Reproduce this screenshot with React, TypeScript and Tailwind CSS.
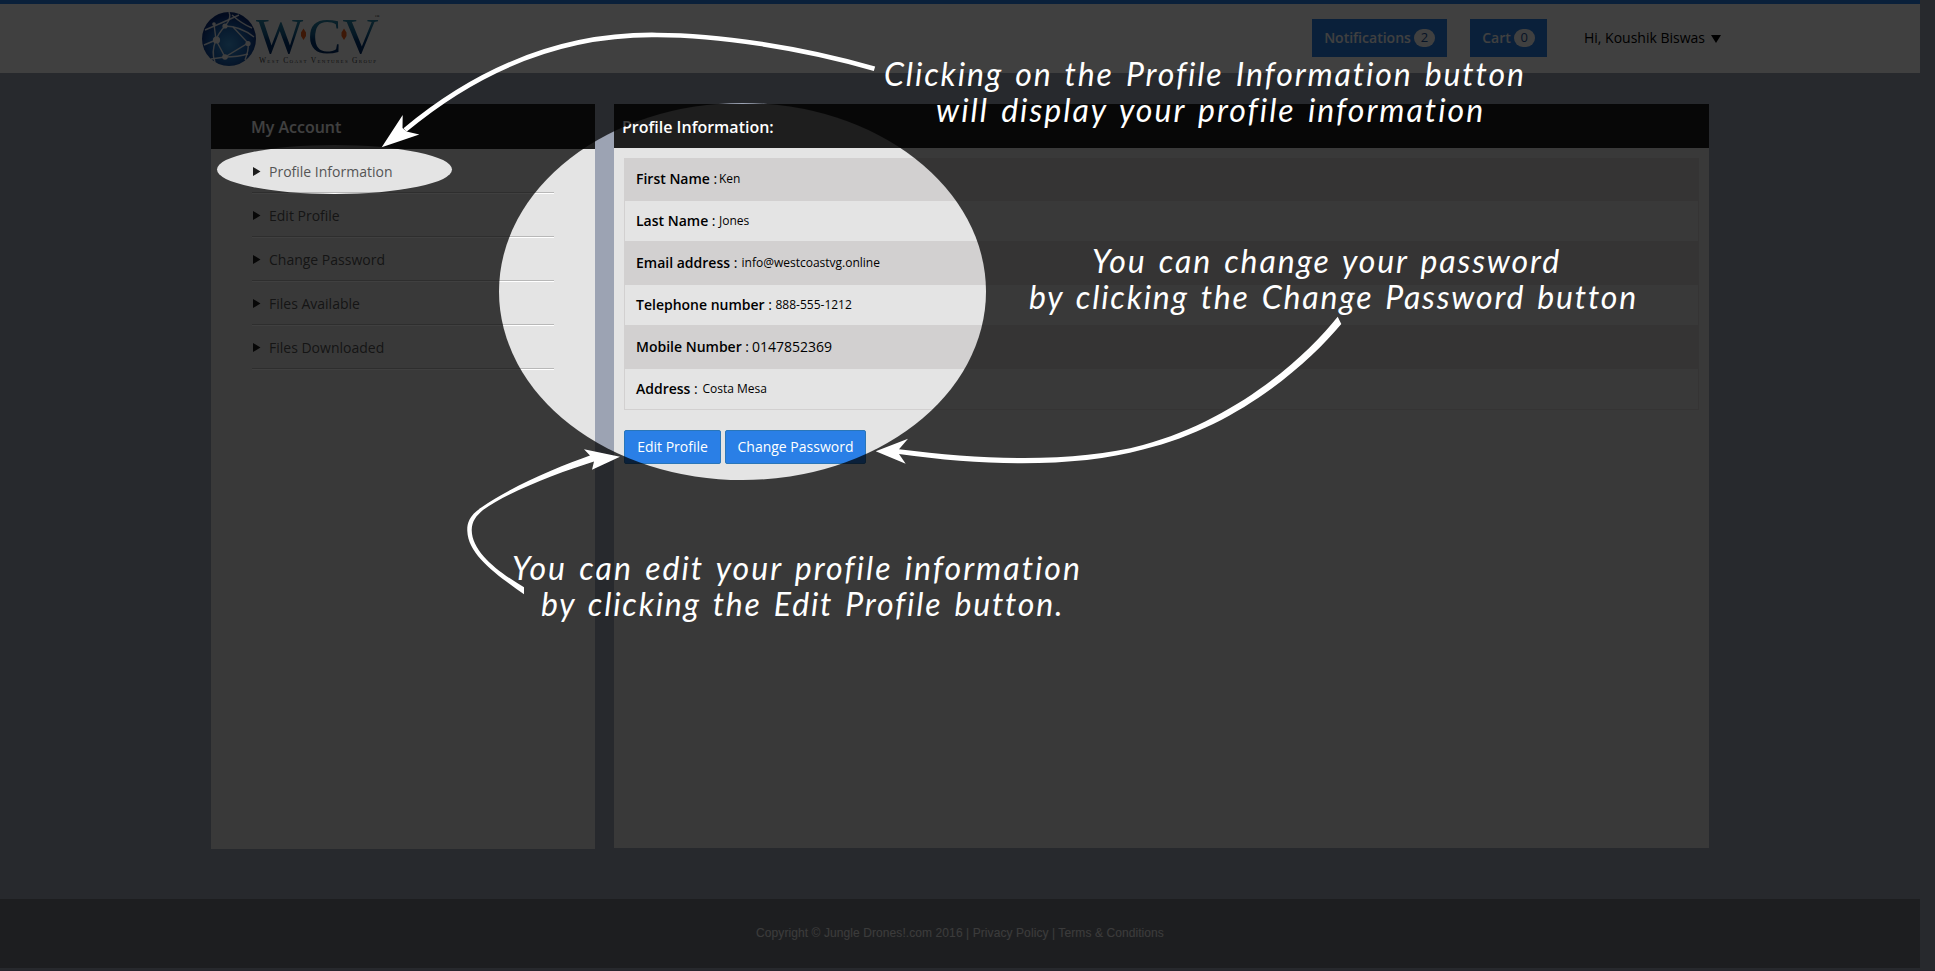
import React from "react";

const menu = ["Profile Information", "Edit Profile", "Change Password", "Files Available", "Files Downloaded"];

const fields = [
  { label: "First Name", value: "Ken", w: "w-[83px]", size: "text-[12px] font-medium" },
  { label: "Last Name", value: "Jones", w: "w-[83px]", size: "text-[12px] font-medium" },
  { label: "Email address", value: "info@westcoastvg.online", w: "w-[105.5px]", size: "text-[12px] font-medium" },
  { label: "Telephone number", value: "888-555-1212", w: "w-[139.5px]", size: "text-[12px] font-medium" },
  { label: "Mobile Number", value: "0147852369", w: "w-[116px]", size: "text-[14px]" },
  { label: "Address", value: "Costa Mesa", w: "w-[66.5px]", size: "text-[12px] font-medium" },
];

function Logo() {
  return (
    <svg className="block h-[60px] w-[190px] shrink-0" viewBox="200 6 190 60">
      <defs>
        <radialGradient id="globe" cx="0.5" cy="0.6" r="0.55">
          <stop offset="0" stopColor="#3f9be0" />
          <stop offset="0.6" stopColor="#1c63b4" />
          <stop offset="1" stopColor="#0b2c7a" />
        </radialGradient>
        <linearGradient id="letters" gradientUnits="userSpaceOnUse" x1="0" y1="20" x2="0" y2="53">
          <stop offset="0" stopColor="#2b87a8" />
          <stop offset="0.45" stopColor="#135f90" />
          <stop offset="0.6" stopColor="#003a78" />
          <stop offset="1" stopColor="#002a66" />
        </linearGradient>
      </defs>
      <circle cx="229" cy="39" r="27" fill="url(#globe)" />
      <g fill="none" stroke="#fff" strokeOpacity="0.9" strokeWidth="1.4">
        <path d="M205 30 Q224 22 239 15" />
        <path d="M229 12 Q232 18 225 26 Q218 34 216 40" />
        <path d="M214 24 L216 40 L204 45" />
        <path d="M225 26 Q240 26 254 37" />
        <path d="M216 40 L225 57 L248 43 L233 27" />
        <path d="M216 40 Q211 52 215 62" />
        <path d="M225 57 Q238 57 248 54" />
        <path d="M225 57 L211 59" />
        <path d="M248 43 Q249 50 245 60" />
        <path d="M232 15 Q242 24 252 28" />
      </g>
      <g fill="#fff">
        <circle cx="216.500" cy="40" r="3.600" />
        <circle cx="225" cy="57" r="2.800" />
        <circle cx="248" cy="43.500" r="2.600" />
        <circle cx="225" cy="26" r="2.600" />
        <circle cx="214" cy="24" r="1.800" />
      </g>
      <g fill="url(#letters)" fontFamily="Liberation Serif, serif" fontSize="50">
        <text x="256" y="52.500">W</text>
        <text x="308" y="52.500">C</text>
        <text x="342.500" y="52.500">V</text>
      </g>
      <path d="M303.500 28.500 L306 32.500 V36 L303.500 40 L301 36 V32.500Z M344 28.500 L346.500 32.500 V36 L344 40 L341.500 36 V32.500Z" fill="#f2601c" />
      <g fill="#444" fontFamily="Liberation Serif, serif">
        <text x="259" y="63" fontSize="7.500" textLength="117" className="[font-variant:small-caps]">West Coast Ventures Group</text>
        <text x="374.500" y="18" fontSize="5">™</text>
      </g>
    </svg>
  );
}

function Header() {
  return (
    <header className="flex h-[73px] w-[1920px] items-start border-t-4 border-[#2a7fe6] bg-white pl-[200px]">
      <div className="pt-[2px]">
        <Logo />
      </div>
      <div className="ml-[922px] flex pt-[15px]">
        <button className="flex h-[38px] w-[135px] items-center justify-center gap-[3px] bg-[#2a7fe6] pb-px text-[14px] font-semibold text-white">
          Notifications
          <span className="flex h-[18px] w-[21px] items-center justify-center rounded-full bg-white text-[13px] font-normal text-[#1d4f96]">2</span>
        </button>
        <button className="ml-[23px] flex h-[38px] w-[77px] items-center justify-center gap-[3px] bg-[#2a7fe6] pb-px text-[14px] font-semibold text-white">
          Cart
          <span className="flex h-[18px] w-[21px] items-center justify-center rounded-full bg-white text-[13px] font-normal text-[#1d4f96]">0</span>
        </button>
        <div className="ml-[37px] flex h-[36px] items-center gap-[6px] whitespace-nowrap text-[14px] text-black">
          Hi, Koushik Biswas
          <svg className="mt-[4px] h-[8px] w-[10px]" viewBox="0 0 10 8">
            <path d="M0 0H10L5 8Z" />
          </svg>
        </div>
      </div>
    </header>
  );
}

function Sidebar() {
  return (
    <aside className="h-[745px] w-[384px] bg-[#e4e4e4]">
      <h2 className="flex h-[45px] items-center bg-[#1e1e1e] pl-[40px] text-[16px] font-semibold text-white">My Account</h2>
      <ul className="ml-[41px] w-[302px]">
        {menu.map((m) => (
          <li key={m} className="flex h-[44px] items-center border-b border-[#b8b8b8] pt-px text-[14px] text-[#555] shadow-[0_1px_0_#fff]">
            <svg className="mt-px mr-[8px] ml-[1px] h-[9px] w-[8px]" viewBox="0 0 8 9">
              <path d="M0 0L7.500 4.500L0 9Z" fill="#1c1c1c" />
            </svg>
            {m}
          </li>
        ))}
      </ul>
    </aside>
  );
}

function Profile() {
  return (
    <section className="h-[744px] w-[1095px] bg-[#e4e4e4]">
      <h2 className="flex h-[44px] items-center bg-[#1e1e1e] pt-[2px] pl-[8px] text-[16px] font-semibold text-white">Profile Information:</h2>
      <div className="mt-[10px] ml-[10px] w-[1075px] border border-[#d2d0d0]">
        {fields.map((f, i) => (
          <div
            key={f.label}
            className={
              "flex pl-[11px] leading-[40px] text-black " +
              (i % 2 === 0 ? "h-[42px] bg-[#d2d0d0]" : i === 5 ? "h-[40px]" : "h-[42px] border-b-2 border-[#d2d0d0]")
            }
          >
            <span className={"whitespace-nowrap text-[14px] leading-[39px] " + f.w}>
              <b className="font-semibold">{f.label}</b> :
            </span>
            <span className={"whitespace-nowrap " + f.size}>{f.value}</span>
          </div>
        ))}
      </div>
      <div className="mt-[20px] ml-[10px] flex gap-[4px]">
        <button className="h-[34px] w-[97px] rounded-[2px] border border-[#2a76b8] bg-[#2a7fe6] pb-[2px] text-[14px] text-white">Edit Profile</button>
        <button className="h-[34px] w-[141px] rounded-[2px] border border-[#2a76b8] bg-[#2a7fe6] pb-[2px] text-[14px] text-white">Change Password</button>
      </div>
    </section>
  );
}

function Spotlights() {
  return (
    <svg className="absolute inset-0 h-[971px] w-[1935px]" viewBox="0 0 1935 971">
      <defs>
        <mask id="holes">
          <rect width="1935" height="971" fill="#fff" />
          <ellipse cx="742.500" cy="291.500" rx="243.500" ry="188.500" fill="#000" />
          <ellipse cx="334.500" cy="169.500" rx="117.500" ry="24.500" fill="#000" />
        </mask>
      </defs>
      <rect width="1935" height="971" fill="#000" fillOpacity="0.75" mask="url(#holes)" />
      <path d="M874.500 68.700 C800 47 716 35 657 35 C583 34 495 55 405 130" fill="none" stroke="#fff" strokeWidth="4.700" />
      <g fill="#fff">
        <path d="M381.700 147.300 L402.700 115 L402.500 128 L406.500 131.500 L419.300 134.500Z" />
        <path d="M1337.700 316.700 C1305 358 1235 420 1143 445 C1080 462 990 461 899 449.300 L908 438.700 L875.700 451.300 L905.700 463.700 L899 454 C990 467 1080 467 1143 449.500 C1237 427 1308 364 1341.300 324Z" />
        <path d="M590 455.500 C560 466 510 487 481.700 507.300 C468 516 467 525 467.300 531 C468 556 500 577 524 594.300 V587.300 C500 573 472 553 471.700 530 C472 521 476 516 483 510 C510 491 560 472 594 461.500 L592 469.700 L620 456.700 L584 449.300Z" />
      </g>
    </svg>
  );
}

const note = "absolute whitespace-nowrap font-['Lato'] text-[32px] leading-[36px] italic text-white [word-spacing:2.8px] ";

function Notes() {
  return (
    <div>
      <p className={note + "left-[884px] top-[56px] tracking-[1.88px]"}>Clicking on the Profile Information button</p>
      <p className={note + "left-[936px] top-[92px] tracking-[2px]"}>will display your profile information</p>
      <p className={note + "left-[1092px] top-[243px] tracking-[1.87px]"}>You can change your password</p>
      <p className={note + "left-[1029px] top-[279px] tracking-[1.8px]"}>by clicking the Change Password button</p>
      <p className={note + "left-[512px] top-[550px] tracking-[2px]"}>You can edit your profile information</p>
      <p className={note + "left-[541px] top-[586px] tracking-[1.8px]"}>by clicking the Edit Profile button.</p>
    </div>
  );
}

export default function App() {
  return (
    <div className="relative h-[971px] w-[1935px] overflow-hidden bg-[#9ca3b3] font-['Open_Sans',sans-serif]">
      <Header />
      <main className="mt-[31px] ml-[211px] flex h-[795px] items-start gap-[19px]">
        <Sidebar />
        <Profile />
      </main>
      <footer className="flex h-[69px] w-[1920px] items-center justify-center bg-[#75787f] pb-[2px] font-['Liberation_Sans',sans-serif] text-[12px] tracking-[0.085px] text-[#ececec]">
        Copyright © Jungle Drones!.com 2016 | Privacy Policy | Terms &amp; Conditions
      </footer>
      <div className="mt-[1.500px] h-[2px] bg-[#a08cb0]" />
      <Spotlights />
      <Notes />
    </div>
  );
}
